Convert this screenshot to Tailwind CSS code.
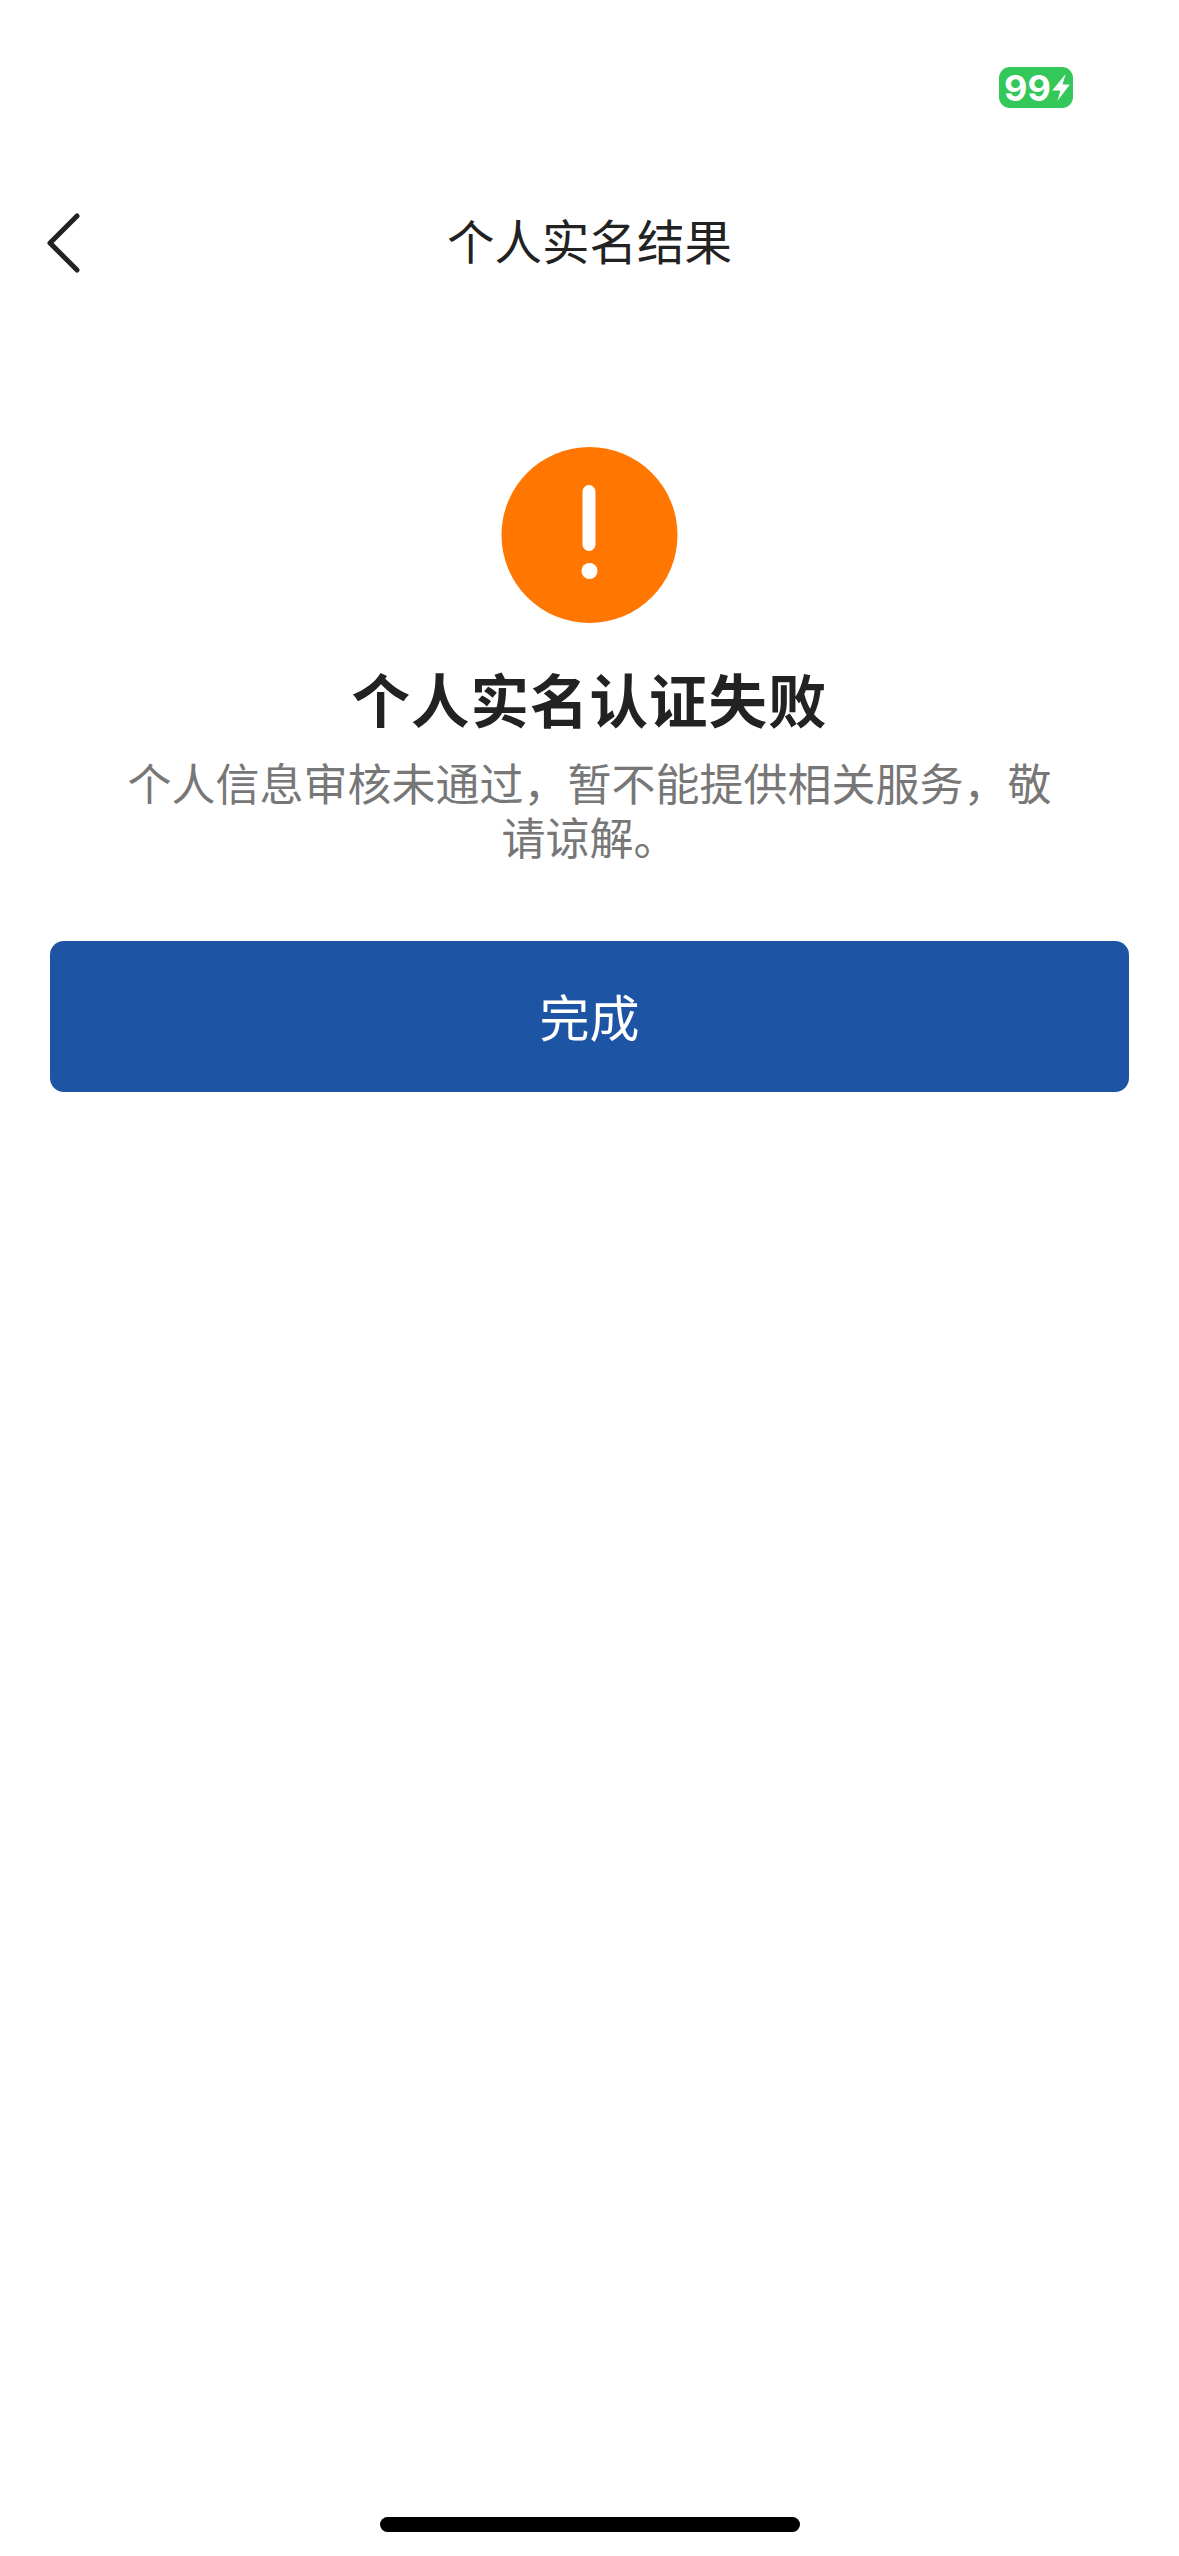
<!DOCTYPE html>
<html lang="zh-CN">
<head>
  <meta charset="UTF-8" />
  <title>个人实名结果</title>
  <script src="https://cdn.jsdelivr.net/npm/@tailwindcss/browser@4"></script>
</head>
<body class="bg-white font-['Noto_Sans_CJK_SC','Noto_Sans',sans-serif] text-[#222222]">
  <div class="w-[1179px] h-[2556px] flex flex-col overflow-hidden">
    <!-- Status bar -->
    <div class="h-[190px] pt-[67px] pr-[106px] flex justify-end items-start">
      <div class="w-[74px] h-[41px] rounded-[11px] bg-[#34c759] flex items-center pl-[5px] text-white">
        <span class="font-['Inter',sans-serif] font-bold text-[36px] leading-none">99</span>
        <svg class="w-[18px] h-[27px] ml-[1px] shrink-0" viewBox="0 0 17 26" fill="#ffffff"><path d="M13 0 L0 16 H8 L5 26 L17 10 H10 Z" /></svg>
      </div>
    </div>

    <!-- Nav -->
    <div class="h-[106px] pb-[6px] relative flex items-center justify-center">
      <svg class="absolute left-[47px] top-[23px] w-[33px] h-[60px]" viewBox="0 0 33 60" fill="none" stroke="#222222" stroke-width="5" stroke-linecap="round" stroke-linejoin="round"><path d="M30 3 L3 30 L30 57" /></svg>
      <h1 class="text-[47.5px] leading-[60px] font-normal">个人实名结果</h1>
    </div>

    <!-- Result -->
    <div class="flex flex-col items-center pt-[151px]">
      <div class="w-[176px] h-[176px] rounded-full bg-[#ff7700] flex flex-col items-center pt-[38px] -translate-x-[0.5px]">
        <div class="w-[13px] h-[66px] rounded-full bg-white"></div>
        <div class="w-[16px] h-[16px] rounded-full bg-white mt-[12px]"></div>
      </div>
      <h2 class="mt-[33px] text-[58.5px] leading-[84px] font-semibold tracking-[1px] text-[#222222]">个人实名认证失败</h2>
      <p class="mt-[15px] w-[930px] text-center text-[44px] leading-[54px] text-[#777777]">个人信息审核未通过，暂不能提供相关服务，敬请谅解。</p>
    </div>

    <!-- Button -->
    <div class="px-[50px] mt-[78px]">
      <button class="w-full h-[151px] pb-[2px] rounded-[14px] bg-[#1e54a4] text-white text-[50px] flex items-center justify-center">完成</button>
    </div>

    <!-- Home indicator -->
    <div class="mt-auto pb-[24px] flex justify-center">
      <div class="w-[420px] h-[15px] rounded-full bg-black"></div>
    </div>
  </div>
</body>
</html>
